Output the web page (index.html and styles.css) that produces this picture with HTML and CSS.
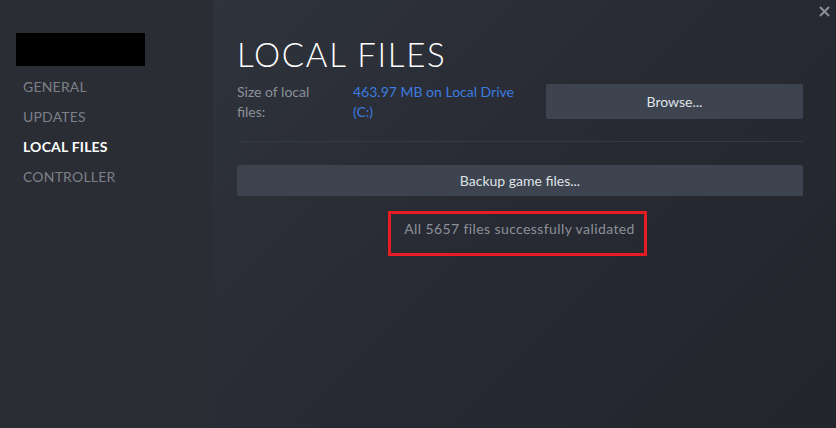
FILE: index.html
```html
<!DOCTYPE html>
<html>
<head>
<meta charset="utf-8">
<link rel="stylesheet" href="styles.css">
</head>
<body>
<div class="window">
  <aside class="sidebar">
    <div class="logo"></div>
    <nav class="nav">
      <div class="nav-item">GENERAL</div>
      <div class="nav-item">UPDATES</div>
      <div class="nav-item active">LOCAL FILES</div>
      <div class="nav-item">CONTROLLER</div>
    </nav>
  </aside>
  <main class="main">
    <h1 class="title">LOCAL FILES</h1>
    <div class="size-row">
      <div class="label">Size of local files:</div>
      <div class="value">463.97 MB on Local Drive (C:)</div>
      <button class="btn browse">Browse...</button>
    </div>
    <div class="sep"></div>
    <button class="btn backup">Backup game files...</button>
    <div class="status-wrap">
      <div class="status">All 5657 files successfully validated</div>
    </div>
  </main>
  <svg class="close" width="11" height="11" viewBox="0 0 11 11"><path d="M1 1L10 10M10 1L1 10" stroke="#8a8f99" stroke-width="2"/></svg>
</div>
</body>
</html>
```

FILE: styles.css
```css
html, body { margin: 0; padding: 0; }
body {
  width: 836px;
  height: 428px;
  overflow: hidden;
  font-family: Lato, "Open Sans", sans-serif;
  background: #262930;
}
.window {
  position: relative;
  display: flex;
  width: 836px;
  height: 428px;
}
.sidebar {
  width: 213px;
  flex: none;
  background: #2a2d34;
  padding: 33px 0 0 16px;
  box-sizing: border-box;
}
.logo {
  width: 129px;
  height: 33px;
  background: #000;
}
.nav { margin-top: 6px; }
.nav-item {
  height: 30px;
  line-height: 30px;
  padding-left: 7px;
  font-size: 14px;
  color: #7c8089;
  letter-spacing: 0.2px;
}
.nav-item.active { color: #ffffff; font-weight: 700; }
.main {
  flex: 1;
  padding: 0 33px 0 24px;
  background: linear-gradient(135deg, #2f333c 0%, #282b33 45%, #22252c 100%);
}
.title {
  margin: 37px 0 0 0;
  font-size: 33px;
  line-height: 34px;
  font-weight: 300;
  letter-spacing: 1.7px;
  color: #ffffff;
}
.size-row {
  display: flex;
  align-items: flex-start;
  margin-top: 11px;
}
.label {
  width: 100px;
  margin-right: 16px;
  font-size: 14px;
  line-height: 20px;
  color: #8b9099;
}
.value {
  width: 180px;
  font-size: 14px;
  line-height: 20px;
  color: #3d7ce0;
}
.btn {
  border: none;
  border-radius: 2px;
  background: #3d4450;
  color: #dfe3e6;
  font-family: Lato, "Open Sans", sans-serif;
  font-size: 14px;
  padding: 0;
}
.browse {
  margin-left: auto;
  margin-top: 2px;
  width: 257px;
  height: 35px;
}
.sep {
  height: 1px;
  background: #353941;
  margin-top: 19px;
}
.backup {
  display: block;
  width: 100%;
  height: 31px;
  margin-top: 23px;
}
.status-wrap {
  display: flex;
  justify-content: center;
  margin-top: 15px;
  padding-right: 5px;
}
.status {
  border: 3px solid #e81c24;
  padding: 5px 9px 14px 13px;
  font-size: 14px;
  line-height: 20px;
  letter-spacing: 0.4px;
  color: #8b9099;
}
.close {
  position: absolute;
  top: 6px;
  right: 6px;
}
```
